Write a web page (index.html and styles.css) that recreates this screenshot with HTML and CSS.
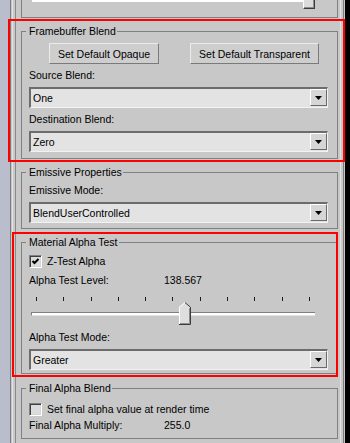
FILE: index.html
```html
<!DOCTYPE html>
<html>
<head>
<meta charset="utf-8">
<link rel="stylesheet" href="styles.css">
</head>
<body>
<div class="screen">
  <div class="strip"></div>
  <div class="rollout">
    <div class="r-inner">
      <div class="r-core">
        <div class="prev-group">
          <div class="prev-track"></div>
          <div class="prev-thumb"></div>
        </div>

        <fieldset class="group g1">
          <legend>Framebuffer Blend</legend>
          <div class="btn-row">
            <button class="btn btn-opaque">Set Default Opaque</button>
            <button class="btn btn-transp">Set Default Transparent</button>
          </div>
          <div class="label">Source Blend:</div>
          <div class="select"><span class="select-text">One</span><span class="select-btn"><svg width="7" height="4" viewBox="0 0 7 4"><path d="M0 0H7L3.5 4Z" fill="#000"/></svg></span></div>
          <div class="label">Destination Blend:</div>
          <div class="select"><span class="select-text">Zero</span><span class="select-btn"><svg width="7" height="4" viewBox="0 0 7 4"><path d="M0 0H7L3.5 4Z" fill="#000"/></svg></span></div>
        </fieldset>

        <fieldset class="group g2">
          <legend>Emissive Properties</legend>
          <div class="label">Emissive Mode:</div>
          <div class="select"><span class="select-text">BlendUserControlled</span><span class="select-btn"><svg width="7" height="4" viewBox="0 0 7 4"><path d="M0 0H7L3.5 4Z" fill="#000"/></svg></span></div>
        </fieldset>

        <fieldset class="group g3">
          <legend>Material Alpha Test</legend>
          <div class="check-row g3-check"><span class="checkbox"><svg width="11" height="11" viewBox="0 0 11 11"><polyline points="2.5,5 4.5,7 8.5,3" fill="none" stroke="#000" stroke-width="2"/></svg></span>Z-Test Alpha</div>
          <div class="value-row g3-value"><span class="value-label">Alpha Test Level:</span><span class="value">138.567</span></div>
          <div class="slider">
            <div class="ticks"><i></i><i></i><i></i><i></i><i></i><i></i><i></i><i></i><i></i><i></i><i></i></div>
            <div class="track"></div>
            <svg class="thumb" width="12" height="23" viewBox="0 0 12 23">
              <path d="M0 5L6 0L12 5V23H0Z" fill="#dedede"/>
              <path d="M0.5 22.5V5.2L6 0.6" fill="none" stroke="#ffffff" stroke-width="1"/>
              <path d="M6 0.6L11.5 5.2V22.5H0" fill="none" stroke="#3c3c3c" stroke-width="1"/>
              <path d="M10.5 6V21.5H1" fill="none" stroke="#8c8c8c" stroke-width="1"/>
            </svg>
          </div>
          <div class="label">Alpha Test Mode:</div>
          <div class="select"><span class="select-text">Greater</span><span class="select-btn"><svg width="7" height="4" viewBox="0 0 7 4"><path d="M0 0H7L3.5 4Z" fill="#000"/></svg></span></div>
        </fieldset>

        <fieldset class="group g4">
          <legend>Final Alpha Blend</legend>
          <div class="check-row g4-check"><span class="checkbox"></span>Set final alpha value at render time</div>
          <div class="value-row g4-value"><span class="value-label">Final Alpha Multiply:</span><span class="value">255.0</span></div>
        </fieldset>
      </div>
    </div>
  </div>
  <div class="sb-gap"></div>
  <div class="scrollbar"></div>
  <div class="highlight hl-1"></div>
  <div class="highlight hl-2"></div>
</div>
</body>
</html>
```

FILE: styles.css
```css
* { box-sizing: border-box; }
html, body { margin: 0; padding: 0; }
body {
  background: #c8c8c8;
  font-family: "Liberation Sans", Arial, sans-serif;
  font-size: 10.5px;
  color: #000;
}
.screen {
  position: relative;
  display: flex;
  width: 350px;
  height: 443px;
  overflow: hidden;
  background: #c8c8c8;
}
.strip { width: 10px; flex: none; background: #b9bdcc; }
.rollout {
  width: 334px;
  flex: none;
  display: flex;
  border-left: 1px solid #7c7c7c;
  border-right: 1px solid #7c7c7c;
  padding: 0 2px 0 1px;
}
.r-inner {
  flex: 1;
  display: flex;
  border-left: 1px solid #e2e2e2;
  border-right: 1px solid #e2e2e2;
  padding-left: 2px;
}
.r-core {
  flex: 1;
  border-left: 1px solid #8a8a8a;
}
.sb-gap { width: 1px; flex: none; }
.scrollbar { width: 5px; flex: none; background: #000; }

/* previous (cut) group */
.prev-group {
  position: relative;
  margin-left: 5px;
  width: 317px;
  height: 18px;
  border: 1px solid #808080;
  border-top: none;
}
.prev-track {
  margin-left: 10px;
  width: 274px;
  height: 2px;
  background: #fff;
}
.prev-thumb {
  position: absolute;
  left: 281px;
  top: 0;
  width: 12px;
  height: 9px;
  background: #dcdcdc;
  border-left: 1px solid #fff;
  border-right: 1px solid #3c3c3c;
  border-bottom: 1px solid #3c3c3c;
  box-shadow: inset -1px -1px 0 #8c8c8c;
}

/* group boxes */
.group {
  margin: 7px 0 0 5px;
  padding: 0 9px 6px 7px;
  width: 317px;
  min-width: 0;
  border: 1px solid #808080;
}
.group legend {
  padding: 0 1px 0 3px;
  margin-left: -3px;
  line-height: 13px;
}
.g2 { padding-bottom: 5px; }
.g3 { padding-bottom: 3px; }
.g4 { margin-top: 8px; }

.btn-row {
  display: flex;
  gap: 31px;
  margin: 5px 0 0 20px;
}
.btn {
  height: 21px;
  padding: 0;
  font: inherit;
  color: #000;
  background: #cecece;
  border: 1px solid;
  border-color: #ececec #7a7a7a #7a7a7a #ececec;
}
.btn-opaque { width: 110px; }
.btn-transp { width: 129px; }

.label {
  padding: 5px 0;
  line-height: 13px;
}

.select {
  display: flex;
  width: 299px;
  height: 21px;
  border-style: solid;
  border-width: 2px 1px 1px 2px;
  border-color: #6c6c6c #f2f2f2 #f2f2f2 #6c6c6c;
  background: #e3e3e3;
}
.select-text {
  flex: 1;
  padding-left: 2px;
  line-height: 18px;
}
.select-btn {
  flex: none;
  width: 17px;
  height: 17px;
  display: flex;
  align-items: center;
  justify-content: center;
  background: #d6d6d6;
  border: 1px solid;
  border-color: #fff #6a6a6a #6a6a6a #fff;
}
.select-btn svg { display: block; }

/* checkbox rows */
.check-row {
  display: flex;
  align-items: center;
  height: 13px;
  line-height: 13px;
}
.g3-check { margin-top: 6px; }
.g4-check { margin-top: 8px; }
.checkbox {
  flex: none;
  width: 13px;
  height: 13px;
  margin-right: 5px;
  border: 1px solid;
  border-color: #808080 #fff #fff #808080;
  box-shadow: inset 1px 1px 0 #404040, inset -1px -1px 0 #d4d4d4;
  background: #dcdcdc;
}
.checkbox svg { display: block; }

.value-row {
  display: flex;
  line-height: 13px;
  height: 13px;
}
.g3-value { margin-top: 6px; }
.g4-value { margin-top: 3px; }
.value-label { width: 135px; flex: none; }

/* slider */
.slider {
  position: relative;
  height: 39px;
  padding-top: 10px;
}
.ticks {
  display: flex;
  justify-content: space-between;
  margin-left: 7px;
  width: 274px;
  height: 4px;
}
.ticks i {
  display: block;
  width: 1px;
  height: 4px;
  background: #1a1a1a;
}
.track {
  margin: 11px 0 0 2px;
  width: 284px;
  height: 4px;
  background: #fff;
  border-top: 1px solid #808080;
  border-left: 1px solid #808080;
  border-bottom: 1px solid #e4e4e4;
}
.thumb {
  position: absolute;
  left: 150px;
  top: 15px;
  display: block;
}

/* red annotation boxes */
.highlight {
  position: absolute;
  border: 2px solid #ff0000;
  pointer-events: none;
}
.hl-1 { left: 8px; top: 19px; width: 337px; height: 143px; }
.hl-2 { left: 12px; top: 232px; width: 326px; height: 145px; }
```
